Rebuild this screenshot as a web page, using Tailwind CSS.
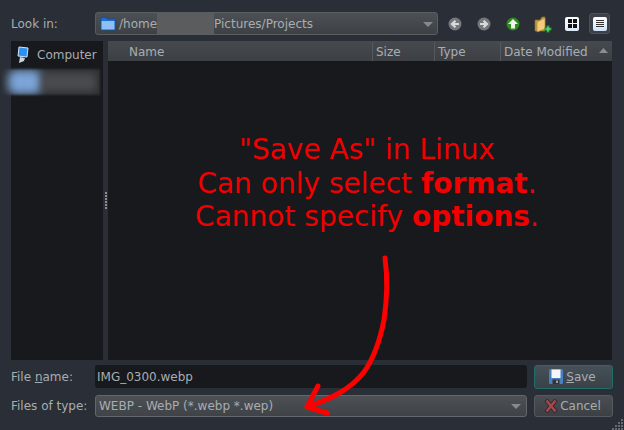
<!DOCTYPE html>
<html lang="en">
<head>
    <meta charset="UTF-8">
    <title>Save As</title>
    <script src="https://cdn.jsdelivr.net/npm/@tailwindcss/browser@4"></script>
</head>
<body class="w-[624px] h-[430px] overflow-hidden bg-[#2a2e36] text-[#a8adb2] text-[12px] font-['DejaVu_Sans',sans-serif]">
    <div class="relative w-[624px] h-[430px] flex flex-col px-[11px] pt-[12px]">
        <!-- Look in row -->
        <div class="flex items-center h-[23px]">
            <span class="w-[84px]">Look in:</span>
            <div class="relative w-[343px] h-[23px] flex items-center pl-[4px] rounded-[3px] border border-[#5a5e63] bg-gradient-to-b from-[#4d5155] to-[#3d4145]">
                <svg width="16" height="15" viewBox="0 0 16 15" class="shrink-0"><path d="M1 3 L1 1.5 L6 1.5 L7 3 L15 3 L15 14 L1 14 Z" fill="#1b6fd6" stroke="#0d4fa8" stroke-width="0.8"/><rect x="1.5" y="5" width="13" height="8.5" fill="#8cc0f5"/></svg>
                <span class="ml-[3px]">/home</span>
                <span class="w-[57px] h-[21px] bg-[#5a5c5e]"></span>
                <span>Pictures/Projects</span>
                <svg width="10" height="6" viewBox="0 0 10 6" class="absolute right-[4px] top-[9px]"><path d="M0 0 H10 L5 5 Z" fill="#85898d"/></svg>
            </div>
            <!-- toolbar icons -->
            <div class="flex items-center ml-[9px]">
                <svg width="16" height="16" viewBox="0 0 16 16"><circle cx="8" cy="8" r="6.5" fill="#74787d"/><path d="M12 8 H6 M8.5 4.8 L5 8 L8.5 11.2" fill="none" stroke="#d8dadc" stroke-width="2.2"/></svg>
                <svg width="16" height="16" viewBox="0 0 16 16" class="ml-[13px]"><circle cx="8" cy="8" r="6.5" fill="#74787d"/><path d="M4 8 H10 M7.5 4.8 L11 8 L7.5 11.2" fill="none" stroke="#d8dadc" stroke-width="2.2"/></svg>
                <svg width="16" height="16" viewBox="0 0 16 16" class="ml-[13px]"><circle cx="8" cy="8" r="6.5" fill="#2f8a1e"/><path d="M8 3 L13 8 H10 V12.5 H6 V8 H3 Z" fill="#f2f5ee"/></svg>
                <svg width="20" height="20" viewBox="0 0 20 20" class="ml-[12px]"><path d="M2 6 L2 17 L12 17 L12 3 L9 3 L7 6 Z" fill="#c79a45" stroke="#8a6a2a" stroke-width="0.7"/><path d="M4 8 L12 4 L12 15 L4 18 Z" fill="#f0cd78" stroke="#a37f36" stroke-width="0.6"/><path d="M15 11.5 V18.5 M11.5 15 H18.5" stroke="#1f8f3a" stroke-width="3"/><path d="M15 12.5 V17.5 M12.5 15 H17.5" stroke="#58d66e" stroke-width="1.6"/></svg>
                <div class="ml-[12px] w-[14px] h-[14px] rounded-[2px] bg-gradient-to-b from-white to-[#dce9f8] grid grid-cols-[4px_4px] content-center justify-center gap-[1px]">
                    <span class="h-[4px] bg-[#111]"></span><span class="h-[4px] bg-[#111]"></span><span class="h-[4px] bg-[#111]"></span><span class="h-[4px] bg-[#111]"></span>
                </div>
                <div class="ml-[10px] w-[21px] h-[21px] rounded-[3px] border border-[#4c5057] bg-[#3c4047] flex items-center justify-center">
                    <div class="w-[14px] h-[14px] rounded-[2px] bg-gradient-to-b from-white to-[#cfe2f7] flex flex-col items-center justify-center gap-[1px]">
                        <span class="w-[8px] h-[1px] bg-[#333]"></span><span class="w-[8px] h-[1px] bg-[#333]"></span><span class="w-[8px] h-[1px] bg-[#333]"></span><span class="w-[8px] h-[1px] bg-[#333]"></span>
                    </div>
                </div>
            </div>
        </div>

        <!-- Sidebar + file list -->
        <div class="flex mt-[6px] h-[319px]">
            <div class="relative w-[92px] bg-[#17191c]">
                <div class="flex items-center h-[29px] pl-[6px] pb-[1px]">
                    <svg width="12" height="20" viewBox="0 0 12 20"><path d="M2 2 L11 3 L10 12 L1 11 Z" fill="#2f8ff0" stroke="#cfe6fb" stroke-width="1"/><path d="M3 12 L8 13 L7 16 L2 18 Z" fill="#c8d6e4"/></svg>
                    <span class="ml-[8px] whitespace-nowrap">Computer</span>
                </div>
                <!-- blurred entry -->
                <div class="absolute left-[-9px] top-[28px] w-[98px] h-[26px] bg-[#2d2f32] blur-[1px] overflow-hidden">
                    <div class="absolute left-[6px] top-[1px] w-[34px] h-[24px] rounded-[8px] bg-[#7ba4d8] blur-[4px]"></div>
                    <div class="absolute left-[40px] top-[4px] w-[54px] h-[18px] bg-[#4c4d4e] blur-[4px]"></div>
                </div>
            </div>
            <!-- splitter -->
            <div class="w-[5px] flex flex-col items-center justify-center gap-[1px] bg-[#2a2e36]">
                <span class="w-[2px] h-[2px] bg-[#8a8e92]"></span><span class="w-[2px] h-[2px] bg-[#8a8e92]"></span><span class="w-[2px] h-[2px] bg-[#8a8e92]"></span><span class="w-[2px] h-[2px] bg-[#8a8e92]"></span><span class="w-[2px] h-[2px] bg-[#8a8e92]"></span><span class="w-[2px] h-[2px] bg-[#8a8e92]"></span>
            </div>
            <div class="w-[504px] flex flex-col bg-[#17191c]">
                <div class="flex h-[20px] items-center pt-[1px] bg-gradient-to-b from-[#464a4f] to-[#3c4045]">
                    <span class="w-[264px] pl-[21px]">Name</span>
                    <span class="w-[62px] pl-[3px] h-full flex items-center border-l border-[#55595e]">Size</span>
                    <span class="w-[66px] pl-[3px] h-full flex items-center border-l border-[#55595e]">Type</span>
                    <span class="relative flex-1 pl-[3px] h-full flex items-center border-l border-[#55595e]">Date Modified
                        <svg width="9" height="5" viewBox="0 0 9 5" class="absolute right-[4px] top-[6px]"><path d="M0 5 H9 L4.5 0 Z" fill="#8a8e92"/></svg>
                    </span>
                </div>
                <div class="flex-1 flex flex-col items-center pt-[72px] pl-[14px] text-[#f00000] text-[28px] leading-[33.5px]">
                    <p>"Save As" in Linux</p>
                    <p>Can only select <b>format</b>.</p>
                    <p>Cannot specify <b>options</b>.</p>
                </div>
            </div>
        </div>

        <!-- File name row -->
        <div class="flex items-center mt-[5px] h-[23px]">
            <span class="w-[84px]">File <u>n</u>ame:</span>
            <div class="w-[432px] h-[23px] flex items-center pl-[2px] rounded-[3px] bg-[#17191c]">IMG_0300.webp</div>
            <div class="ml-[7px] w-[79px] h-[24px] flex items-center justify-center pr-[2px] rounded-[3px] border border-[#1f6f66] bg-gradient-to-b from-[#465058] to-[#394248]">
                <svg width="14" height="15" viewBox="0 0 14 15"><rect width="14" height="15" rx="1.5" fill="#4a7fc0"/><rect x="2.5" y="0.5" width="9" height="8.5" fill="#f4f6f8"/><rect x="3.5" y="10.5" width="7" height="4.5" fill="#30343a"/><rect x="7" y="11.5" width="2" height="2.5" fill="#9aa0a6"/></svg>
                <span class="ml-[3px]"><u>S</u>ave</span>
            </div>
        </div>
        <!-- Files of type row -->
        <div class="flex items-center mt-[7px] h-[22px]">
            <span class="w-[84px] whitespace-nowrap">Files of type:</span>
            <div class="relative w-[432px] h-[22px] flex items-center pl-[3px] rounded-[3px] border border-[#63676b] bg-gradient-to-b from-[#4d5155] to-[#3f4347]">WEBP - WebP (*.webp *.wep)
                <svg width="10" height="6" viewBox="0 0 10 6" class="absolute right-[5px] top-[8px]"><path d="M0 0 H10 L5 5 Z" fill="#85898d"/></svg>
            </div>
            <div class="ml-[7px] w-[79px] h-[22px] flex items-center justify-center pr-[2px] rounded-[3px] border border-[#565a5f] bg-gradient-to-b from-[#4a4e52] to-[#3c4044]">
                <svg width="14" height="14" viewBox="0 0 14 14"><path d="M2 1 L12 13 M12 1 L2 13" stroke="#2c2326" stroke-width="4"/><path d="M2.5 1.5 L11.5 12.5 M11.5 1.5 L2.5 12.5" stroke="#a8474e" stroke-width="2.6"/></svg>
                <span class="ml-[2px]">Cancel</span>
            </div>
        </div>

        <!-- Size grip -->
        <svg width="12" height="12" viewBox="0 0 12 12" class="absolute right-0 bottom-0" fill="#666a6f"><rect x="9" y="1" width="2" height="2"/><rect x="6" y="4" width="2" height="2"/><rect x="9" y="4" width="2" height="2"/><rect x="3" y="7" width="2" height="2"/><rect x="6" y="7" width="2" height="2"/><rect x="9" y="7" width="2" height="2"/><rect x="0" y="10" width="2" height="2"/><rect x="3" y="10" width="2" height="2"/><rect x="6" y="10" width="2" height="2"/><rect x="9" y="10" width="2" height="2"/></svg>

        <!-- Hand drawn arrow over the dialog -->
        <svg width="624" height="430" viewBox="0 0 624 430" class="absolute left-0 top-0 pointer-events-none" fill="none" stroke="#ff0000" stroke-width="5" stroke-linecap="round" stroke-linejoin="round">
            <path d="M385 258 C388 280 387 300 384 320 C380 340 374 358 364 372 C350 390 330 399 307 407"/>
            <path d="M318 386 L307 407 L327 413"/>
        </svg>
    </div>
</body>
</html>
